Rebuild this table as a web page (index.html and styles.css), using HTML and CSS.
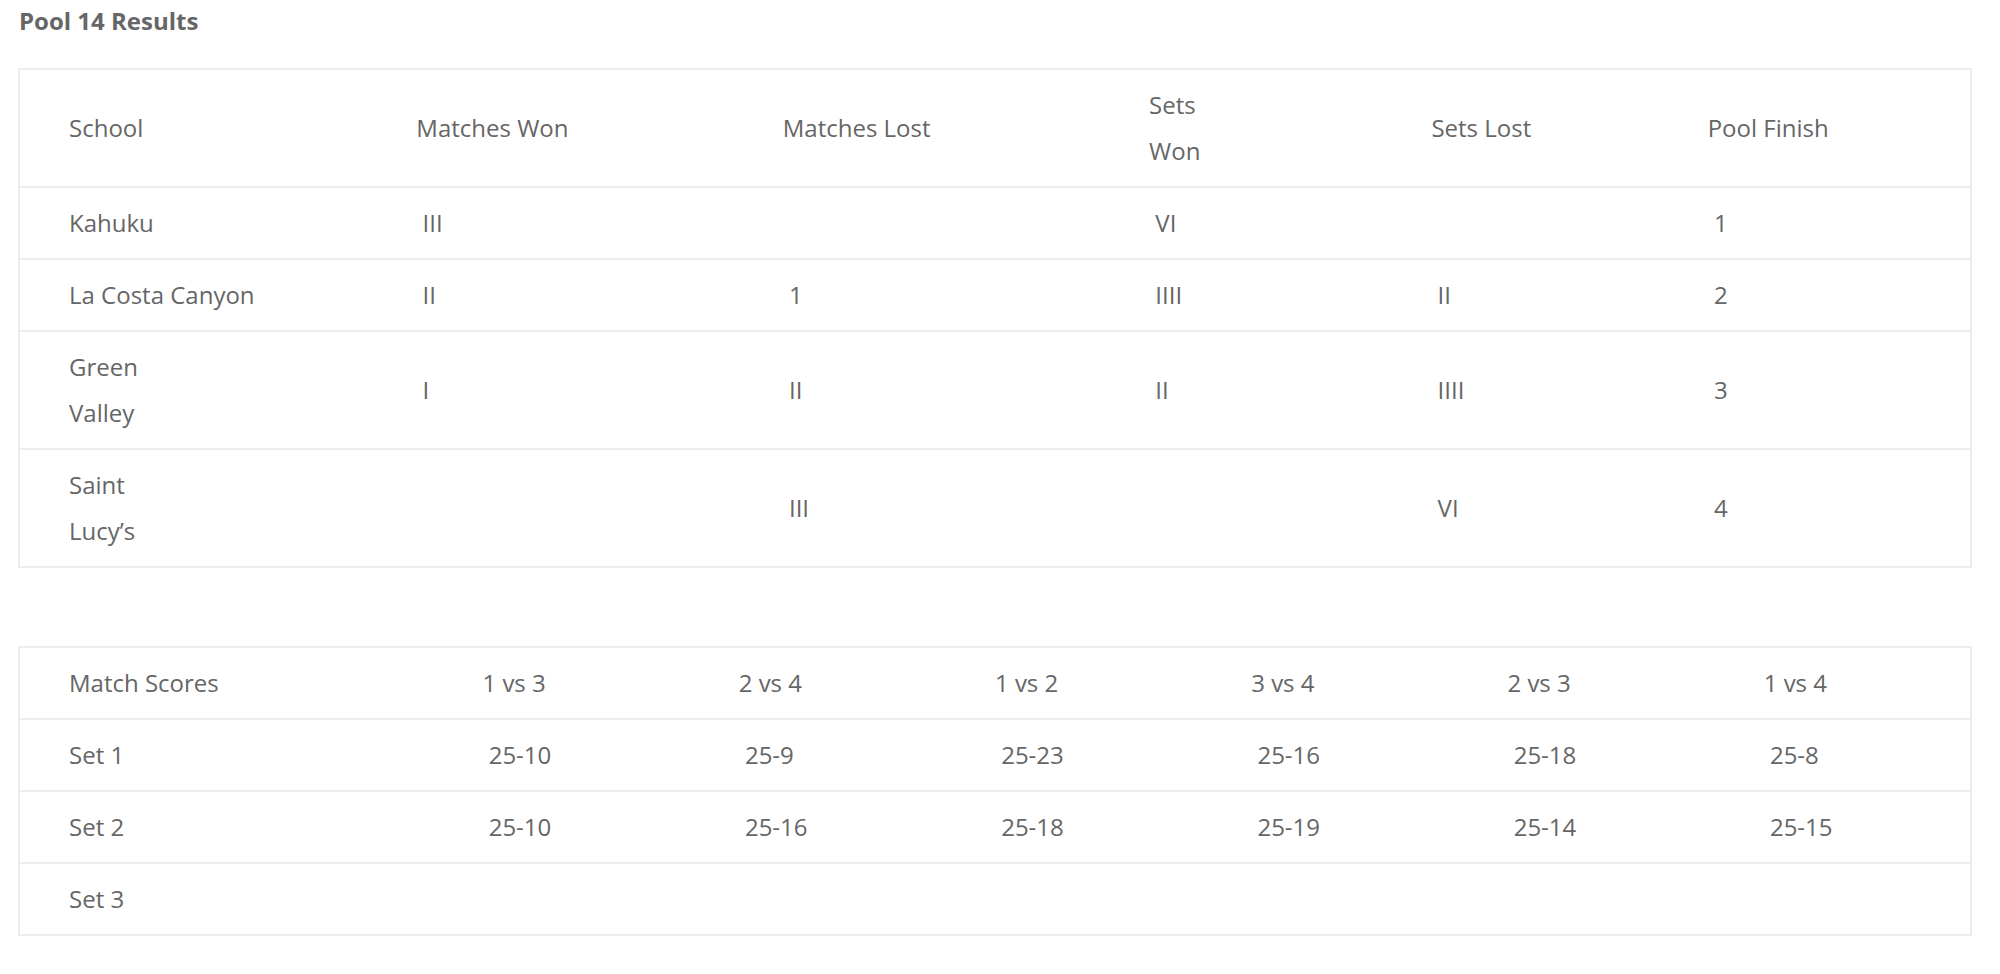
FILE: index.html
```html
<!DOCTYPE html>
<html lang="en">
<head>
<meta charset="utf-8">
<title>Pool 14 Results</title>
<link rel="stylesheet" href="styles.css">
</head>
<body>
<main class="page">
  <h2 class="pool-title">Pool 14 Results</h2>

  <table class="results standings">
    <colgroup>
      <col class="c-school"><col class="c-mw"><col class="c-ml"><col class="c-sw"><col class="c-sl"><col class="c-pf">
    </colgroup>
    <tbody>
      <tr>
        <td>School</td>
        <td>Matches Won</td>
        <td>Matches Lost</td>
        <td>Sets<br>Won</td>
        <td>Sets Lost</td>
        <td>Pool Finish</td>
      </tr>
      <tr>
        <td>Kahuku</td>
        <td>&nbsp;III</td>
        <td></td>
        <td>&nbsp;VI</td>
        <td></td>
        <td>&nbsp;1</td>
      </tr>
      <tr>
        <td>La Costa Canyon</td>
        <td>&nbsp;II</td>
        <td>&nbsp;1</td>
        <td>&nbsp;IIII</td>
        <td>&nbsp;II</td>
        <td>&nbsp;2</td>
      </tr>
      <tr>
        <td>Green<br>Valley</td>
        <td>&nbsp;I</td>
        <td>&nbsp;II</td>
        <td>&nbsp;II</td>
        <td>&nbsp;IIII</td>
        <td>&nbsp;3</td>
      </tr>
      <tr>
        <td>Saint<br>Lucy’s</td>
        <td></td>
        <td>&nbsp;III</td>
        <td></td>
        <td>&nbsp;VI</td>
        <td>&nbsp;4</td>
      </tr>
    </tbody>
  </table>

  <table class="results scores">
    <colgroup>
      <col class="c-label"><col class="c-m"><col class="c-m"><col class="c-m"><col class="c-m"><col class="c-m"><col class="c-m">
    </colgroup>
    <tbody>
      <tr>
        <td>Match Scores</td>
        <td>1 vs 3</td>
        <td>2 vs 4</td>
        <td>1 vs 2</td>
        <td>3 vs 4</td>
        <td>2 vs 3</td>
        <td>1 vs 4</td>
      </tr>
      <tr>
        <td>Set 1</td>
        <td>&nbsp;25-10</td>
        <td>&nbsp;25-9</td>
        <td>&nbsp;25-23</td>
        <td>&nbsp;25-16</td>
        <td>&nbsp;25-18</td>
        <td>&nbsp;25-8</td>
      </tr>
      <tr>
        <td>Set 2</td>
        <td>&nbsp;25-10</td>
        <td>&nbsp;25-16</td>
        <td>&nbsp;25-18</td>
        <td>&nbsp;25-19</td>
        <td>&nbsp;25-14</td>
        <td>&nbsp;25-15</td>
      </tr>
      <tr>
        <td>Set 3</td>
        <td></td>
        <td></td>
        <td></td>
        <td></td>
        <td></td>
        <td></td>
      </tr>
    </tbody>
  </table>
</main>
</body>
</html>
```

FILE: styles.css
```css
html, body {
  margin: 0;
  padding: 0;
  background: #ffffff;
}

body {
  font-family: "Open Sans", "Noto Sans", "Liberation Sans", sans-serif;
  color: #666666;
}

.page {
  padding: 0 0 0 18px;
}

.pool-title {
  margin: 4px 0 31px 1px;
  font-size: 24px;
  font-weight: 700;
  line-height: normal;
  color: #666666;
}

.results {
  width: 1954px;
  table-layout: fixed;
  border-collapse: collapse;
  border: 2px solid #ececec;
  font-size: 24px;
  line-height: 46px;
  color: #666666;
}

.results td {
  padding: 12px 0 12px 49px;
  vertical-align: middle;
  text-align: left;
  border-top: 2px solid #ececec;
  font-weight: 400;
  white-space: nowrap;
}

.standings .c-school { width: 348px; }
.standings .c-mw { width: 366px; }
.standings .c-ml { width: 366px; }
.standings .c-sw { width: 282px; }
.standings .c-sl { width: 276px; }
.standings .c-pf { width: 312px; }

.scores {
  margin-top: 78px;
}

.scores .c-label { width: 414px; }
.scores .c-m { width: 256px; }
```
